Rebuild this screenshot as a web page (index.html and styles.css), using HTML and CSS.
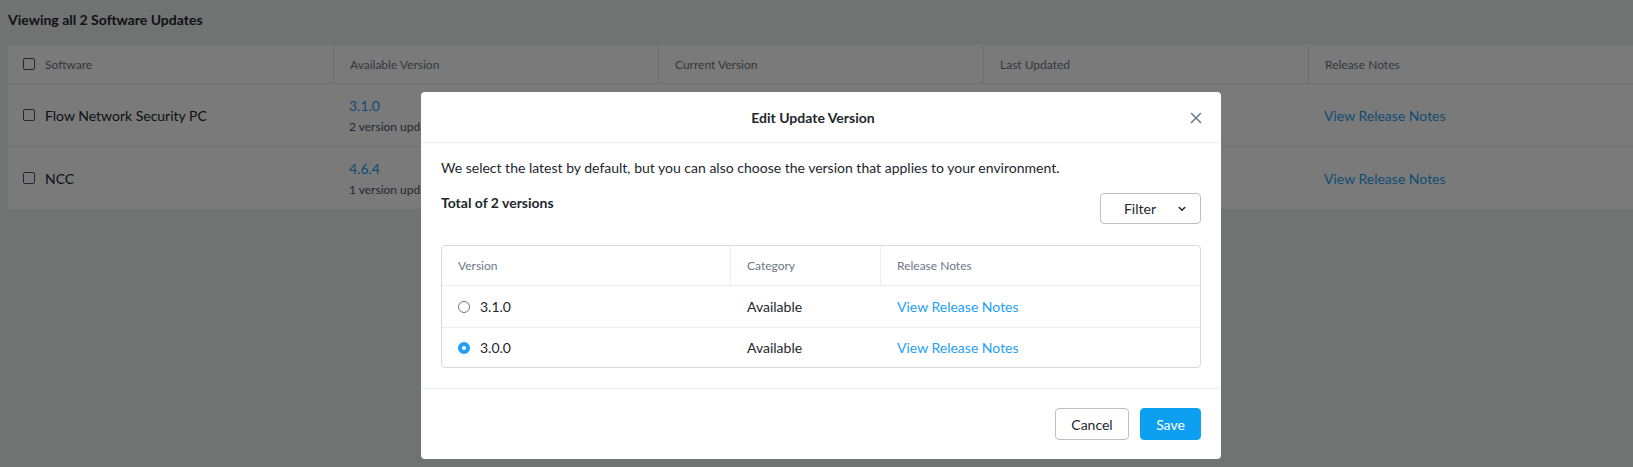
FILE: index.html
```html
<!DOCTYPE html>
<html>
<head>
<meta charset="utf-8">
<link rel="stylesheet" href="styles.css">
</head>
<body>
<div class="page">
  <h1 class="title">Viewing all 2 Software Updates</h1>
  <div class="sw-table">
    <div class="sw-row sw-head">
      <div class="sw-cell first"><span class="cb"></span>Software</div>
      <div class="sw-cell">Available Version</div>
      <div class="sw-cell">Current Version</div>
      <div class="sw-cell">Last Updated</div>
      <div class="sw-cell">Release Notes</div>
    </div>
    <div class="sw-row r1">
      <div class="sw-cell first"><span class="cb"></span><span class="name">Flow Network Security PC</span></div>
      <div class="sw-cell stack"><a class="ver">3.1.0</a><span class="sub">2 version updates</span></div>
      <div class="sw-cell"></div>
      <div class="sw-cell"></div>
      <div class="sw-cell"><a class="link">View Release Notes</a></div>
    </div>
    <div class="sw-row r2">
      <div class="sw-cell first"><span class="cb"></span><span class="name">NCC</span></div>
      <div class="sw-cell stack"><a class="ver">4.6.4</a><span class="sub">1 version update</span></div>
      <div class="sw-cell"></div>
      <div class="sw-cell"></div>
      <div class="sw-cell"><a class="link">View Release Notes</a></div>
    </div>
  </div>
</div>

<div class="overlay"></div>

<div class="modal">
  <div class="m-head">
    <div class="m-title">Edit Update Version</div>
    <svg class="close" width="12" height="12" viewBox="0 0 12 12"><path d="M1.5 1.5L10.5 10.5M10.5 1.5L1.5 10.5" stroke="#6b7e91" stroke-width="1.6" fill="none" stroke-linecap="round"/></svg>
  </div>
  <div class="m-body">
    <p class="desc">We select the latest by default, but you can also choose the version that applies to your environment.</p>
    <div class="total-row">
      <div class="total">Total of 2 versions</div>
      <button class="filter">Filter<svg class="chev" width="8" height="6" viewBox="0 0 8 6"><path d="M1.2 1.5L4 4.3L6.8 1.5" stroke="#22272e" stroke-width="1.5" fill="none" stroke-linecap="round" stroke-linejoin="round"/></svg></button>
    </div>
    <div class="v-table">
      <div class="v-row v-head">
        <div class="v-cell">Version</div>
        <div class="v-cell">Category</div>
        <div class="v-cell">Release Notes</div>
      </div>
      <div class="v-row">
        <div class="v-cell"><span class="radio"></span>3.1.0</div>
        <div class="v-cell">Available</div>
        <div class="v-cell"><a class="vlink">View Release Notes</a></div>
      </div>
      <div class="v-row last">
        <div class="v-cell"><span class="radio on"></span>3.0.0</div>
        <div class="v-cell">Available</div>
        <div class="v-cell"><a class="vlink">View Release Notes</a></div>
      </div>
    </div>
  </div>
  <div class="m-foot">
    <button class="btn cancel">Cancel</button>
    <button class="btn save">Save</button>
  </div>
</div>
</body>
</html>
```
FILE: styles.css
```css
* { box-sizing: border-box; }
html, body { margin: 0; padding: 0; }
body {
  width: 1633px;
  height: 467px;
  overflow: hidden;
  background: #eceeef;
  font-family: Lato, "Open Sans", sans-serif;
  color: #22272e;
  position: relative;
}
.page { padding-left: 8px; }
.title {
  margin: 0;
  padding: 10px 0 15px;
  font-size: 14px;
  line-height: 20px;
  font-weight: 700;
  color: #22272e;
}
.sw-table { background: #fff; width: 1625px; }
.sw-row {
  display: grid;
  grid-template-columns: repeat(5, 325px);
  border-bottom: 1px solid #e6e9ec;
}
.sw-head { height: 39px; }
.sw-row.r1 { height: 63px; }
.sw-row.r2 { height: 62px; border-bottom: none; }
.sw-cell {
  display: flex;
  align-items: center;
  padding-left: 16px;
  font-size: 14px;
}
.sw-head .sw-cell {
  font-size: 12px;
  color: #6b7785;
  border-left: 1px solid #e6e9ec;
}
.sw-head .sw-cell.first { border-left: none; }
.sw-cell.first { padding-left: 15px; }
.cb {
  width: 12px; height: 12px;
  border: 1px solid #4d5560;
  border-radius: 2px;
  margin-right: 10px;
  flex: none;
}
.name { color: #22272e; }
.stack { flex-direction: column; align-items: flex-start; justify-content: center; gap: 5px; }
.ver { color: #1fa0f0; font-size: 14px; line-height: 17px; }
.sub { color: #4d5560; font-size: 12px; line-height: 15px; white-space: nowrap; }
.link { color: #1fa0f0; font-size: 14px; }

.overlay {
  position: absolute; inset: 0;
  background: rgba(0, 0, 0, 0.52);
}

.modal {
  position: absolute;
  left: 421px; top: 92px;
  width: 800px;
  background: #fff;
  border-radius: 4px;
}
.m-head {
  height: 51px;
  border-bottom: 1px solid #eceef1;
  display: flex;
  align-items: center;
  justify-content: center;
  padding-right: 16px;
  position: relative;
}
.m-title { font-size: 14px; font-weight: 700; color: #22272e; }
.close { position: absolute; right: 19px; top: 20px; }
.m-body { padding: 15px 20px 20px; }
.desc { margin: 0; font-size: 14px; line-height: 20px; color: #22272e; }
.total-row {
  margin-top: 15px;
  display: flex;
  justify-content: space-between;
  align-items: flex-start;
}
.total { font-size: 14px; line-height: 20px; font-weight: 700; }
.filter {
  width: 101px; height: 31px;
  border: 1px solid #b9c2cb;
  border-radius: 4px;
  background: #fff;
  font-family: inherit;
  font-size: 14px;
  color: #22272e;
  display: flex; align-items: center; justify-content: flex-end;
  padding: 0 14px 0 0;
  gap: 22px;
}
.v-table {
  margin-top: 21px;
  border: 1px solid #d6dbe0;
  border-radius: 4px;
}
.v-row {
  display: grid;
  grid-template-columns: 288px 150px 1fr;
  height: 42px;
  border-bottom: 1px solid #eceef1;
}
.v-head { height: 40px; }
.v-row.last { height: 39px; border-bottom: none; }
.v-cell {
  display: flex; align-items: center;
  padding-left: 16px;
  font-size: 14px;
  color: #22272e;
}
.v-head .v-cell { font-size: 12px; color: #6b7785; }
.v-head .v-cell + .v-cell { border-left: 1px solid #eceef1; }
.v-row:not(.v-head) .v-cell + .v-cell { padding-left: 17px; }
.radio {
  width: 12px; height: 12px;
  border: 1px solid #6b7785;
  border-radius: 50%;
  margin-right: 10px;
  flex: none;
}
.radio.on {
  border: 4px solid #1fa0f0;
  background: #fff;
}
.vlink { color: #1fa0f0; }
.m-foot {
  border-top: 1px solid #eceef1;
  padding: 19px 20px;
  display: flex;
  justify-content: flex-end;
  gap: 11px;
}
.btn {
  height: 32px;
  border-radius: 4px;
  font-family: inherit;
  font-size: 14px;
}
.cancel { width: 74px; background: #fff; border: 1px solid #b9c2cb; color: #22272e; }
.save { width: 61px; background: #0ea0f0; border: 1px solid #0ea0f0; color: #fff; }
```
